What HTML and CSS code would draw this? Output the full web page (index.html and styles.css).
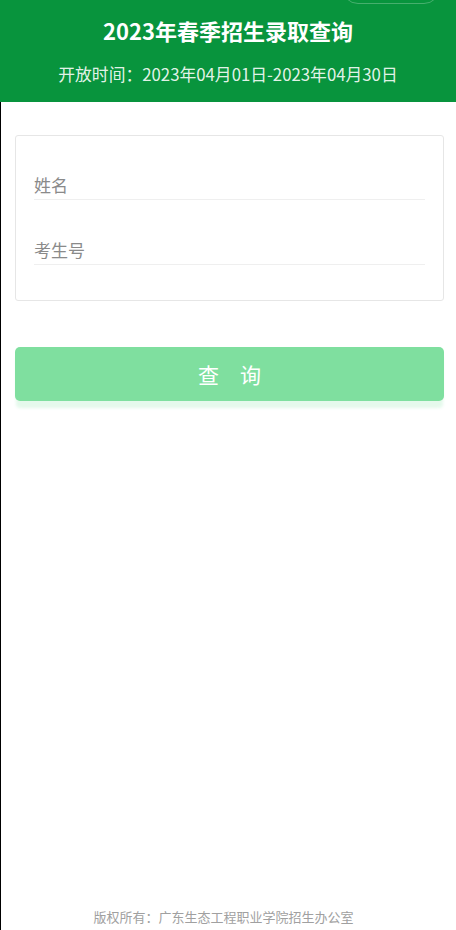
FILE: index.html
```html
<!DOCTYPE html>
<html lang="zh-CN">
<head>
    <meta charset="UTF-8">
    <meta name="viewport" content="width=device-width, initial-scale=1.0">
    <title>2023年春季招生录取查询</title>
    <link rel="stylesheet" href="styles.css">
</head>
<body>

    <div class="header">
        <div class="capsule"></div>
        <h1>2023年春季招生录取查询</h1>
        <p>开放时间：2023年04月01日-2023年04月30日</p>
    </div>

    <div class="main">
        <div class="card">
            <input type="text" class="field" placeholder="姓名">
            <input type="text" class="field" placeholder="考生号">
        </div>

        <button class="query-btn">查&emsp;询</button>

        <div class="footer">版权所有：广东生态工程职业学院招生办公室</div>
    </div>

</body>
</html>
```

FILE: styles.css
```css
body {
    margin: 0;
    font-family: "Noto Sans CJK SC", "Noto Sans", sans-serif;
    background: #fff;
    display: flex;
    flex-direction: column;
    min-height: 930px;
}

.header {
    position: relative;
    background: #08943d;
    color: #fff;
    text-align: center;
    height: 102px;
    box-sizing: border-box;
    padding-top: 14px;
    overflow: hidden;
}

.capsule {
    position: absolute;
    top: -28px;
    right: 16px;
    width: 96px;
    height: 30px;
    border: 1px solid rgba(255, 255, 255, 0.25);
    border-radius: 16px;
}

.header h1 {
    margin: 0;
    font-size: 22px;
    font-weight: bold;
    line-height: 32px;
}

.header p {
    margin: 16px 0 0;
    font-size: 16.8px;
    line-height: 24px;
    color: rgba(255, 255, 255, 0.9);
}

.main {
    flex: 1;
    display: flex;
    flex-direction: column;
    border-left: 1px solid #000;
    padding: 33px 12px 0 14px;
}

.card {
    border: 1px solid #e6e6e6;
    border-radius: 3px;
    padding: 36px 18px 35px;
    display: flex;
    flex-direction: column;
    gap: 37px;
}

.field {
    box-sizing: border-box;
    border: none;
    border-bottom: 1px solid #efefef;
    outline: none;
    padding: 0 0 3px;
    font-family: inherit;
    font-size: 17px;
    height: 28px;
    background: transparent;
}

.field::placeholder {
    color: #8a8a8a;
}

.query-btn {
    margin-top: 46px;
    height: 54px;
    background: #7fdf9f;
    border: none;
    border-radius: 5px;
    color: #fff;
    font-family: inherit;
    font-size: 21px;
    box-shadow: 0 8px 3px -1px rgba(127, 223, 159, 0.2);
}

.footer {
    margin-top: auto;
    padding: 0 12px 3px 0;
    text-align: center;
    font-size: 13px;
    color: #a0a0a0;
    line-height: 20px;
}
```
